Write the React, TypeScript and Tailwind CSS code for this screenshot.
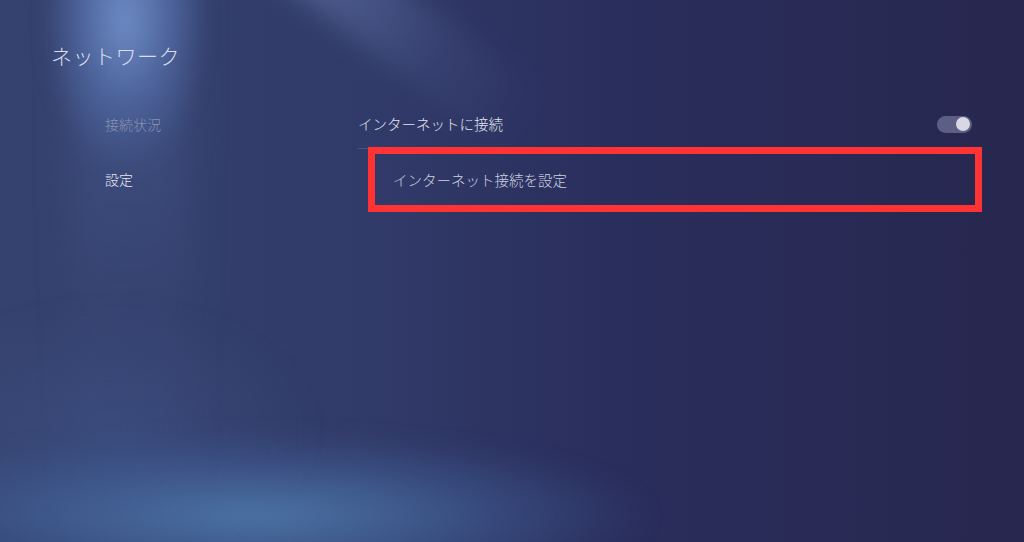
import React from 'react';

const font = { fontFamily: '"Noto Sans CJK JP", "Noto Sans", sans-serif' };

export default function App() {
  return (
    <div
      className="relative w-[1024px] h-[542px] overflow-hidden bg-[linear-gradient(to_right,#35426f_0%,#313b69_35%,#2a2e5c_60%,#27274f_100%)]"
      style={font}
    >
      {/* background lights */}
      <div className="absolute left-[45px] top-[-130px] w-[160px] h-[300px] rounded-full bg-[radial-gradient(ellipse_at_center,rgba(130,165,225,0.85)_0%,rgba(100,130,195,0.4)_40%,rgba(60,80,140,0)_72%)] blur-[10px]" />
      <div className="absolute left-[70px] top-[-40px] w-[120px] h-[600px] bg-[linear-gradient(to_bottom,rgba(95,125,185,0.35),rgba(70,95,150,0.1)_60%,rgba(60,80,140,0))] blur-[18px]" />
      <div className="absolute left-[250px] top-[-60px] w-[70px] h-[300px] rotate-[-52deg] origin-top bg-[linear-gradient(to_bottom,rgba(125,150,205,0.45),rgba(95,115,175,0.15)_65%,rgba(60,80,140,0))] blur-[12px]" />
      <div className="absolute left-[-160px] top-[430px] w-[820px] h-[170px] rounded-full bg-[radial-gradient(ellipse_at_center,rgba(85,135,185,0.75)_0%,rgba(70,105,165,0.35)_45%,rgba(60,80,140,0)_70%)] blur-[10px]" />
      <div className="absolute left-[-100px] top-[300px] w-[420px] h-[260px] rounded-full bg-[radial-gradient(ellipse_at_center,rgba(70,95,150,0.35),rgba(60,80,140,0)_70%)] blur-[10px]" />

      <div className="relative pl-[51px] pt-[40px] font-light">
        <h1 className="text-[21px] leading-[30px] text-[#d9dded] tracking-[0.5px]">ネットワーク</h1>

        <div className="flex mt-[30px]">
          {/* side menu */}
          <div className="w-[307px] pl-[54px] text-[14px]">
            <div className="h-[49px] flex items-center text-[#8a92b3]">接続状況</div>
            <div className="h-[61px] flex items-center text-[#e6e8f2]">設定</div>
          </div>

          {/* settings list */}
          <div className="w-[614px]">
            <div className="h-[49px] flex items-center justify-between border-b border-[#4b5280]">
              <span className="text-[14.5px] text-[#e2e5f0]">インターネットに接続</span>
              <div className="w-[35px] h-[17px] rounded-full bg-[#5c5e86] flex items-center justify-end pr-[2px]">
                <div className="w-[14px] h-[14px] rounded-full bg-[#d8d8e2]" />
              </div>
            </div>
            <div className="ml-[10px] mt-[-2px] w-[614px] h-[65px] border-[7px] border-[#ff3333] flex items-center pl-[18px]">
              <span className="text-[14.5px] text-[#cdd1e2]">インターネット接続を設定</span>
            </div>
          </div>
        </div>
      </div>
    </div>
  );
}
